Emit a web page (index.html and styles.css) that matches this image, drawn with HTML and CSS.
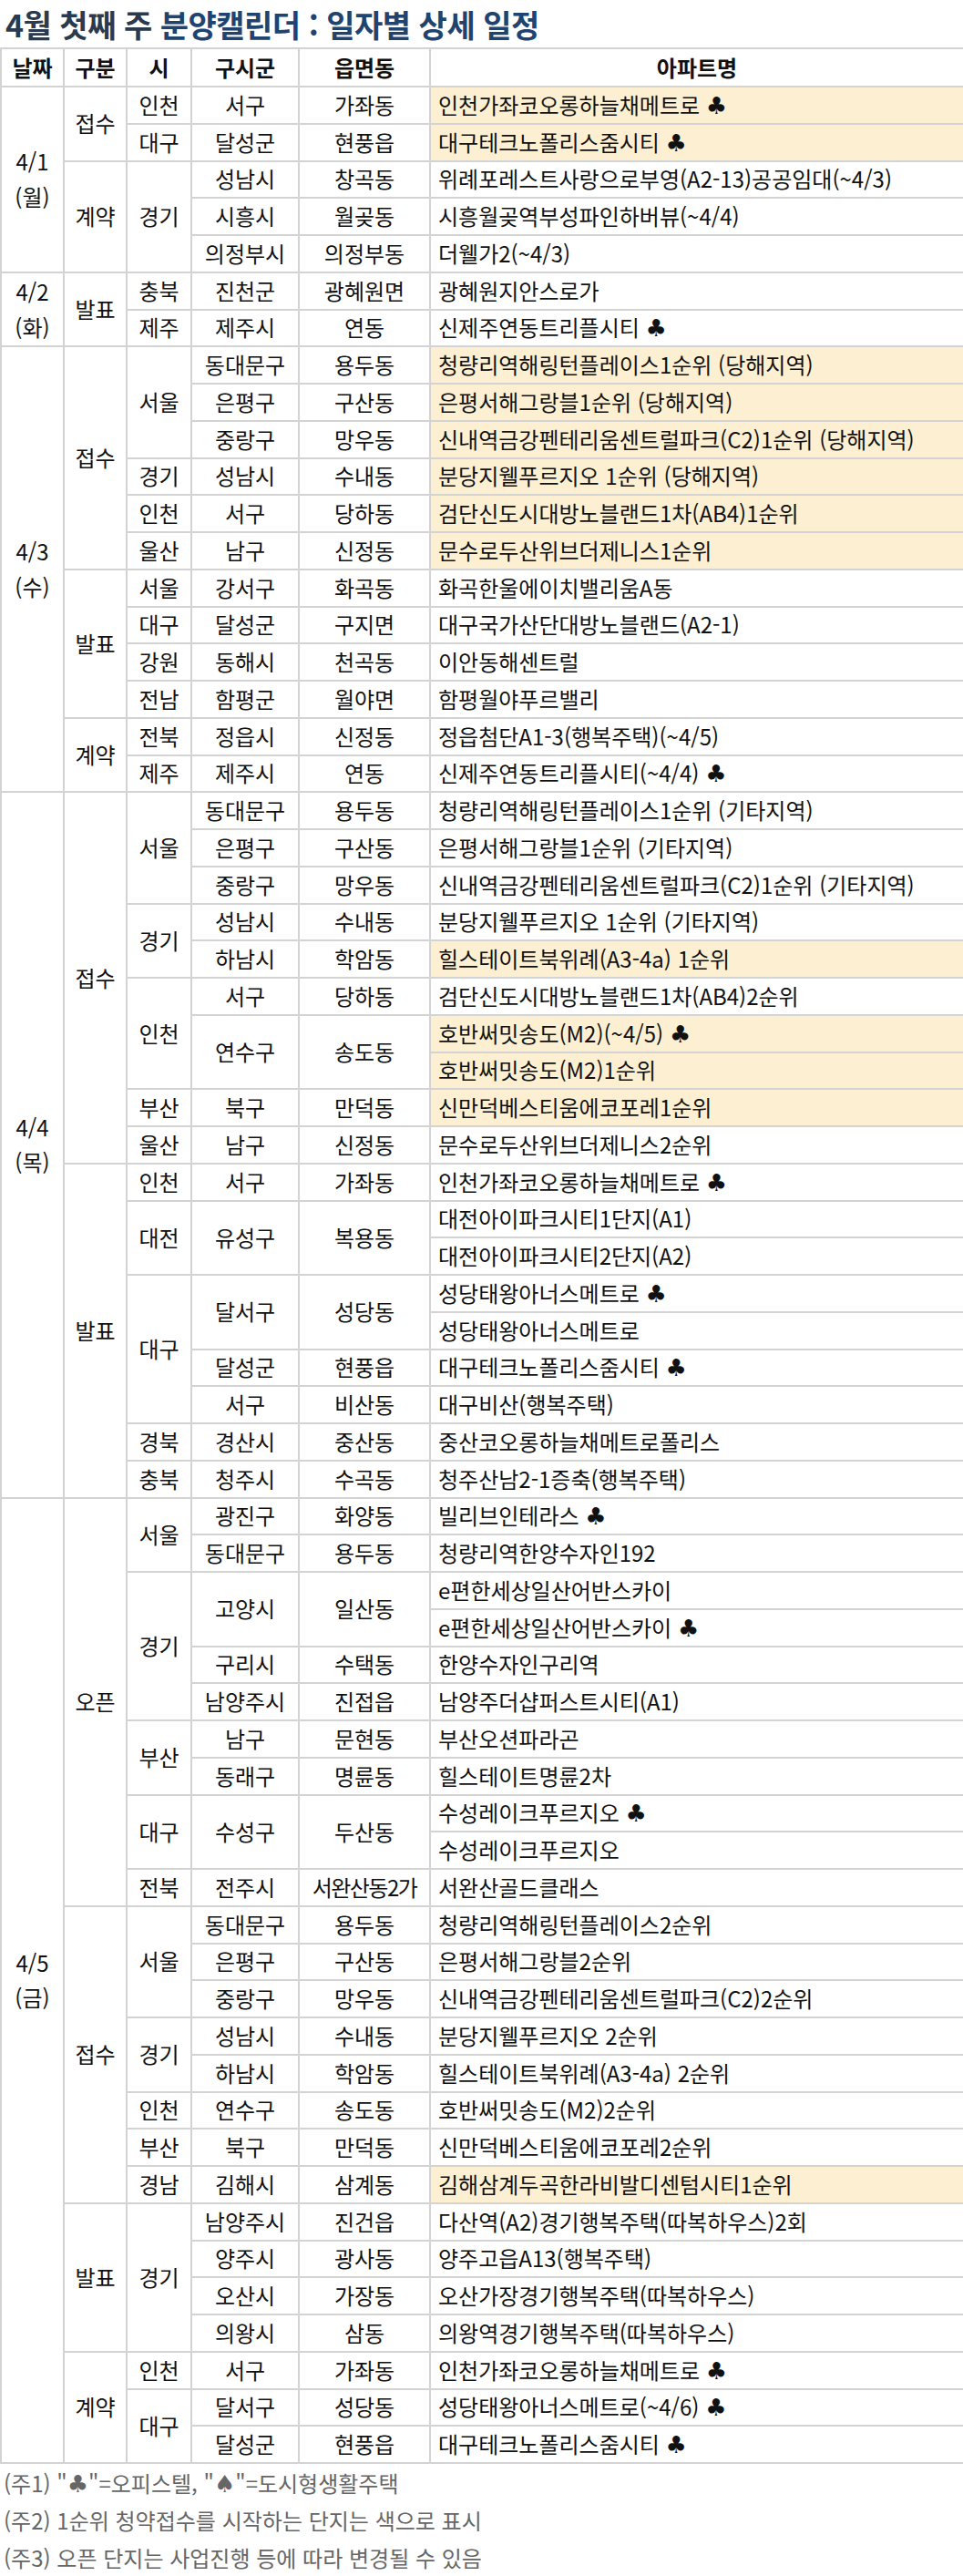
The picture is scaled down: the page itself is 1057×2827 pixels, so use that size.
FILE: index.html
```html
<!DOCTYPE html>
<html lang="ko">
<head>
<meta charset="utf-8">
<title>4월 첫째 주 분양캘린더</title>
<link rel="stylesheet" href="styles.css">
</head>
<body>
<h1 class="title"><span class="t1">4월 첫째 주</span> <span class="t2">분양캘린더 : 일자별 상세 일정</span></h1>
<table class="cal">
<colgroup>
<col class="c-date"><col class="c-type"><col class="c-si"><col class="c-gu"><col class="c-dong"><col class="c-apt">
</colgroup>
<thead>
<tr class="head"><th>날짜</th><th>구분</th><th>시</th><th>구시군</th><th>읍면동</th><th>아파트명</th></tr>
</thead>
<tbody>
<!-- 4/1 -->
<tr><td rowspan="5" class="date">4/1<br>(월)</td><td rowspan="2">접수</td><td>인천</td><td>서구</td><td>가좌동</td><td class="apt hl">인천가좌코오롱하늘채메트로 <span class="club">♣</span></td></tr>
<tr><td>대구</td><td>달성군</td><td>현풍읍</td><td class="apt hl">대구테크노폴리스줌시티 <span class="club">♣</span></td></tr>
<tr><td rowspan="3">계약</td><td rowspan="3">경기</td><td>성남시</td><td>창곡동</td><td class="apt">위례포레스트사랑으로부영(A2-13)공공임대(~4/3)</td></tr>
<tr><td>시흥시</td><td>월곶동</td><td class="apt">시흥월곶역부성파인하버뷰(~4/4)</td></tr>
<tr><td>의정부시</td><td>의정부동</td><td class="apt">더웰가2(~4/3)</td></tr>
<!-- 4/2 -->
<tr><td rowspan="2" class="date">4/2<br>(화)</td><td rowspan="2">발표</td><td>충북</td><td>진천군</td><td>광혜원면</td><td class="apt">광혜원지안스로가</td></tr>
<tr><td>제주</td><td>제주시</td><td>연동</td><td class="apt">신제주연동트리플시티 <span class="club">♣</span></td></tr>
<!-- 4/3 -->
<tr><td rowspan="12" class="date">4/3<br>(수)</td><td rowspan="6">접수</td><td rowspan="3">서울</td><td>동대문구</td><td>용두동</td><td class="apt hl">청량리역해링턴플레이스1순위 (당해지역)</td></tr>
<tr><td>은평구</td><td>구산동</td><td class="apt hl">은평서해그랑블1순위 (당해지역)</td></tr>
<tr><td>중랑구</td><td>망우동</td><td class="apt hl">신내역금강펜테리움센트럴파크(C2)1순위 (당해지역)</td></tr>
<tr><td>경기</td><td>성남시</td><td>수내동</td><td class="apt hl">분당지웰푸르지오 1순위 (당해지역)</td></tr>
<tr><td>인천</td><td>서구</td><td>당하동</td><td class="apt hl">검단신도시대방노블랜드1차(AB4)1순위</td></tr>
<tr><td>울산</td><td>남구</td><td>신정동</td><td class="apt hl">문수로두산위브더제니스1순위</td></tr>
<tr><td rowspan="4">발표</td><td>서울</td><td>강서구</td><td>화곡동</td><td class="apt">화곡한울에이치밸리움A동</td></tr>
<tr><td>대구</td><td>달성군</td><td>구지면</td><td class="apt">대구국가산단대방노블랜드(A2-1)</td></tr>
<tr><td>강원</td><td>동해시</td><td>천곡동</td><td class="apt">이안동해센트럴</td></tr>
<tr><td>전남</td><td>함평군</td><td>월야면</td><td class="apt">함평월야푸르밸리</td></tr>
<tr><td rowspan="2">계약</td><td>전북</td><td>정읍시</td><td>신정동</td><td class="apt">정읍첨단A1-3(행복주택)(~4/5)</td></tr>
<tr><td>제주</td><td>제주시</td><td>연동</td><td class="apt">신제주연동트리플시티(~4/4) <span class="club">♣</span></td></tr>
<!-- 4/4 -->
<tr><td rowspan="19" class="date">4/4<br>(목)</td><td rowspan="10">접수</td><td rowspan="3">서울</td><td>동대문구</td><td>용두동</td><td class="apt">청량리역해링턴플레이스1순위 (기타지역)</td></tr>
<tr><td>은평구</td><td>구산동</td><td class="apt">은평서해그랑블1순위 (기타지역)</td></tr>
<tr><td>중랑구</td><td>망우동</td><td class="apt">신내역금강펜테리움센트럴파크(C2)1순위 (기타지역)</td></tr>
<tr><td rowspan="2">경기</td><td>성남시</td><td>수내동</td><td class="apt">분당지웰푸르지오 1순위 (기타지역)</td></tr>
<tr><td>하남시</td><td>학암동</td><td class="apt hl">힐스테이트북위례(A3-4a) 1순위</td></tr>
<tr><td rowspan="3">인천</td><td>서구</td><td>당하동</td><td class="apt">검단신도시대방노블랜드1차(AB4)2순위</td></tr>
<tr><td rowspan="2">연수구</td><td rowspan="2">송도동</td><td class="apt hl">호반써밋송도(M2)(~4/5) <span class="club">♣</span></td></tr>
<tr><td class="apt hl">호반써밋송도(M2)1순위</td></tr>
<tr><td>부산</td><td>북구</td><td>만덕동</td><td class="apt hl">신만덕베스티움에코포레1순위</td></tr>
<tr><td>울산</td><td>남구</td><td>신정동</td><td class="apt">문수로두산위브더제니스2순위</td></tr>
<tr><td rowspan="9">발표</td><td>인천</td><td>서구</td><td>가좌동</td><td class="apt">인천가좌코오롱하늘채메트로 <span class="club">♣</span></td></tr>
<tr><td rowspan="2">대전</td><td rowspan="2">유성구</td><td rowspan="2">복용동</td><td class="apt">대전아이파크시티1단지(A1)</td></tr>
<tr><td class="apt">대전아이파크시티2단지(A2)</td></tr>
<tr><td rowspan="4">대구</td><td rowspan="2">달서구</td><td rowspan="2">성당동</td><td class="apt">성당태왕아너스메트로 <span class="club">♣</span></td></tr>
<tr><td class="apt">성당태왕아너스메트로</td></tr>
<tr><td>달성군</td><td>현풍읍</td><td class="apt">대구테크노폴리스줌시티 <span class="club">♣</span></td></tr>
<tr><td>서구</td><td>비산동</td><td class="apt">대구비산(행복주택)</td></tr>
<tr><td>경북</td><td>경산시</td><td>중산동</td><td class="apt">중산코오롱하늘채메트로폴리스</td></tr>
<tr><td>충북</td><td>청주시</td><td>수곡동</td><td class="apt">청주산남2-1증축(행복주택)</td></tr>
<!-- 4/5 -->
<tr><td rowspan="26" class="date">4/5<br>(금)</td><td rowspan="11">오픈</td><td rowspan="2">서울</td><td>광진구</td><td>화양동</td><td class="apt">빌리브인테라스 <span class="club">♣</span></td></tr>
<tr><td>동대문구</td><td>용두동</td><td class="apt">청량리역한양수자인192</td></tr>
<tr><td rowspan="4">경기</td><td rowspan="2">고양시</td><td rowspan="2">일산동</td><td class="apt">e편한세상일산어반스카이</td></tr>
<tr><td class="apt">e편한세상일산어반스카이 <span class="club">♣</span></td></tr>
<tr><td>구리시</td><td>수택동</td><td class="apt">한양수자인구리역</td></tr>
<tr><td>남양주시</td><td>진접읍</td><td class="apt">남양주더샵퍼스트시티(A1)</td></tr>
<tr><td rowspan="2">부산</td><td>남구</td><td>문현동</td><td class="apt">부산오션파라곤</td></tr>
<tr><td>동래구</td><td>명륜동</td><td class="apt">힐스테이트명륜2차</td></tr>
<tr><td rowspan="2">대구</td><td rowspan="2">수성구</td><td rowspan="2">두산동</td><td class="apt">수성레이크푸르지오 <span class="club">♣</span></td></tr>
<tr><td class="apt">수성레이크푸르지오</td></tr>
<tr><td>전북</td><td>전주시</td><td class="narrow">서완산동2가</td><td class="apt">서완산골드클래스</td></tr>
<tr><td rowspan="8">접수</td><td rowspan="3">서울</td><td>동대문구</td><td>용두동</td><td class="apt">청량리역해링턴플레이스2순위</td></tr>
<tr><td>은평구</td><td>구산동</td><td class="apt">은평서해그랑블2순위</td></tr>
<tr><td>중랑구</td><td>망우동</td><td class="apt">신내역금강펜테리움센트럴파크(C2)2순위</td></tr>
<tr><td rowspan="2">경기</td><td>성남시</td><td>수내동</td><td class="apt">분당지웰푸르지오 2순위</td></tr>
<tr><td>하남시</td><td>학암동</td><td class="apt">힐스테이트북위례(A3-4a) 2순위</td></tr>
<tr><td>인천</td><td>연수구</td><td>송도동</td><td class="apt">호반써밋송도(M2)2순위</td></tr>
<tr><td>부산</td><td>북구</td><td>만덕동</td><td class="apt">신만덕베스티움에코포레2순위</td></tr>
<tr><td>경남</td><td>김해시</td><td>삼계동</td><td class="apt hl">김해삼계두곡한라비발디센텀시티1순위</td></tr>
<tr><td rowspan="4">발표</td><td rowspan="4">경기</td><td>남양주시</td><td>진건읍</td><td class="apt">다산역(A2)경기행복주택(따복하우스)2회</td></tr>
<tr><td>양주시</td><td>광사동</td><td class="apt">양주고읍A13(행복주택)</td></tr>
<tr><td>오산시</td><td>가장동</td><td class="apt">오산가장경기행복주택(따복하우스)</td></tr>
<tr><td>의왕시</td><td>삼동</td><td class="apt">의왕역경기행복주택(따복하우스)</td></tr>
<tr><td rowspan="3">계약</td><td>인천</td><td>서구</td><td>가좌동</td><td class="apt">인천가좌코오롱하늘채메트로 <span class="club">♣</span></td></tr>
<tr><td rowspan="2">대구</td><td>달서구</td><td>성당동</td><td class="apt">성당태왕아너스메트로(~4/6) <span class="club">♣</span></td></tr>
<tr><td>달성군</td><td>현풍읍</td><td class="apt">대구테크노폴리스줌시티 <span class="club">♣</span></td></tr>
</tbody>
</table>
<div class="notes">
<p>(주1) "<span class="sym">♣</span>"=오피스텔, "<span class="sym">♠</span>"=도시형생활주택</p>
<p>(주2) 1순위 청약접수를 시작하는 단지는 색으로 표시</p>
<p>(주3) 오픈 단지는 사업진행 등에 따라 변경될 수 있음</p>
</div>
</body>
</html>
```

FILE: styles.css
```css
html, body {
  margin: 0;
  padding: 0;
  background: #ffffff;
}

body {
  width: 1057px;
  font-family: "Noto Sans CJK KR", "Noto Sans", sans-serif;
  color: #111111;
}

.title {
  margin: 0;
  height: 52px;
  display: flex;
  align-items: center;
  gap: 9px;
  padding: 2px 0 0 6px;
  box-sizing: border-box;
  font-size: 34px;
  font-weight: 700;
  line-height: 1;
  letter-spacing: -0.5px;
}

.t1 { color: #2b3a4e; }
.t2 { color: #1f4470; }

.cal {
  width: 1057px;
  border-collapse: collapse;
  table-layout: fixed;
}

.c-date { width: 69px; }
.c-type { width: 69px; }
.c-si { width: 71px; }
.c-gu { width: 118px; }
.c-dong { width: 144px; }
.c-apt { width: 586px; }

.cal th,
.cal td {
  border: 2px solid #d3d3d3;
  padding: 0;
  font-size: 24px;
  line-height: 1.2;
  text-align: center;
  vertical-align: middle;
  white-space: nowrap;
  overflow: hidden;
}

.cal tr { height: 40.75px; }
.cal tr.head { height: 42px; }

.cal th {
  font-weight: 700;
  color: #111111;
}

.cal td.apt {
  text-align: left;
  padding-left: 8px;
}

.cal td.hl {
  background: #fdf0d2;
}

.cal td.date {
  line-height: 1.6;
}

.cal td.narrow {
  letter-spacing: -1.5px;
}

.club {
  font-family: "DejaVu Sans", sans-serif;
  font-size: 26px;
  line-height: 1;
}

.notes {
  padding: 0 0 0 4px;
  color: #666666;
  font-size: 24px;
}

.notes p {
  margin: 0;
  height: 41px;
  line-height: 41px;
  white-space: nowrap;
}

.sym {
  font-family: "DejaVu Sans", sans-serif;
  font-size: 26px;
  line-height: 1;
}
```
